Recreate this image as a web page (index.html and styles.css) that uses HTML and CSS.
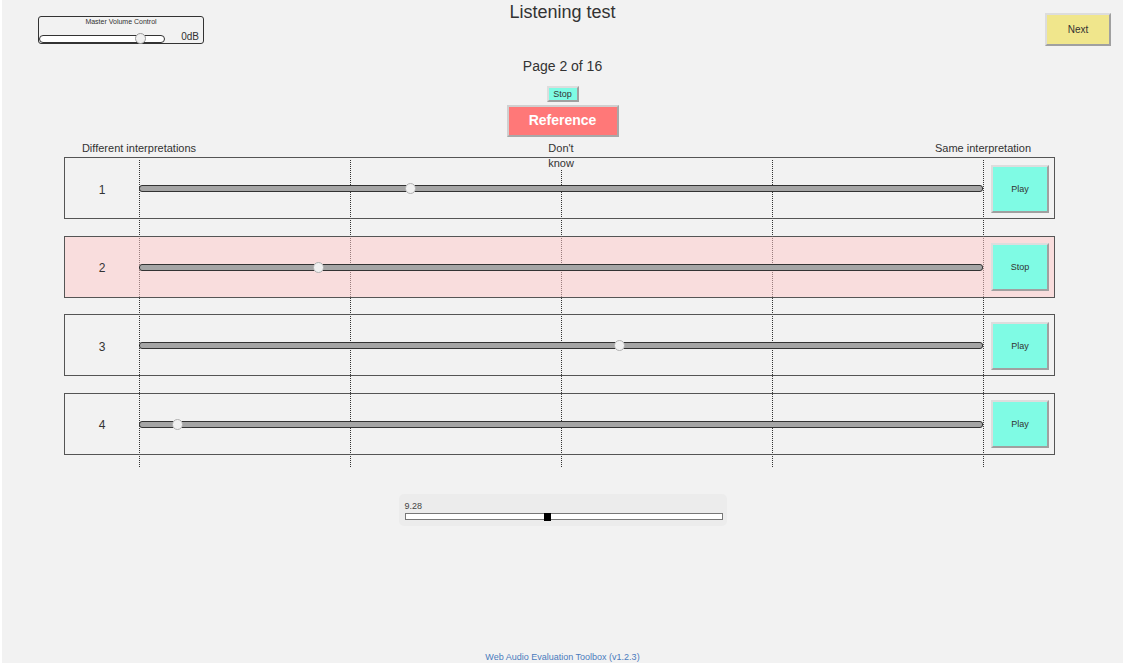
FILE: index.html
```html
<!DOCTYPE html>
<html>
<head>
<meta charset="utf-8">
<title>Listening test</title>
<link rel="stylesheet" href="styles.css">
</head>
<body>
<div class="page">
  <header class="top">
    <div class="master">
      <div class="master-label">Master Volume Control</div>
      <div class="master-row">
        <div class="master-slider">
          <div class="master-track"></div>
          <div class="master-thumb" style="left: 80.5%"></div>
        </div>
        <span class="master-value">0dB</span>
      </div>
    </div>
    <h1 class="title">Listening test</h1>
    <button class="btn btn-next">Next</button>
  </header>

  <div class="page-count">Page 2 of 16</div>
  <button class="btn btn-aqua btn-stop-small">Stop</button>
  <button class="btn btn-reference">Reference</button>

  <section class="test-area">
    <div class="scale">
      <span class="scale-label" style="left: 0%">Different interpretations</span>
      <span class="scale-label scale-label-mid" style="left: 50%">Don't know</span>
      <span class="scale-label" style="left: 100%">Same interpretation</span>
      <span class="tick" style="left: 0%"></span>
      <span class="tick" style="left: 25%"></span>
      <span class="tick tick-mid" style="left: 50%"></span>
      <span class="tick" style="left: 75%"></span>
      <span class="tick" style="left: 100%"></span>
    </div>
    <div class="rows">
      <div class="row">
        <div class="num">1</div>
        <div class="slider"><div class="track"></div><div class="thumb" style="left: 32.2%"></div></div>
        <button class="btn btn-aqua btn-play">Play</button>
      </div>
      <div class="row row-active">
        <div class="num">2</div>
        <div class="slider"><div class="track"></div><div class="thumb" style="left: 21.3%"></div></div>
        <button class="btn btn-aqua btn-play">Stop</button>
      </div>
      <div class="row">
        <div class="num">3</div>
        <div class="slider"><div class="track"></div><div class="thumb" style="left: 56.9%"></div></div>
        <button class="btn btn-aqua btn-play">Play</button>
      </div>
      <div class="row">
        <div class="num">4</div>
        <div class="slider"><div class="track"></div><div class="thumb" style="left: 4.6%"></div></div>
        <button class="btn btn-aqua btn-play">Play</button>
      </div>
    </div>
  </section>

  <div class="value-box">
    <div class="value-label">9.28</div>
    <div class="value-slider">
      <div class="value-thumb" style="left: 45%"></div>
    </div>
  </div>

  <footer class="footer">Web Audio Evaluation Toolbox (v1.2.3)</footer>
</div>
</body>
</html>
```

FILE: styles.css
```css
* { box-sizing: border-box; }

html, body {
  margin: 0;
  padding: 0;
  background: #ffffff;
}

body {
  font-family: "Liberation Sans", Arial, sans-serif;
  color: #333333;
}

.page {
  margin-left: 2px;
  width: 1121px;
  height: 663px;
  background: #f2f2f2;
  display: flex;
  flex-direction: column;
  align-items: center;
}

.top {
  width: 100%;
  height: 50px;
  display: grid;
  grid-template-columns: 1fr auto 1fr;
  align-items: start;
  padding: 0 12px;
}

.title {
  margin: 1px 0 0;
  font-size: 18px;
  line-height: 22px;
  font-weight: normal;
  color: #333333;
  text-align: center;
}

.master {
  margin-top: 16px;
  margin-left: 24px;
  width: 166px;
  height: 28px;
  border: 1px solid #333333;
  border-radius: 3px;
  padding-top: 1px;
}

.master-label {
  font-size: 7px;
  line-height: 8px;
  text-align: center;
  color: #333333;
}

.master-row {
  display: flex;
  align-items: center;
  margin-top: 5px;
  padding-right: 4px;
}

.master-slider {
  position: relative;
  width: 126px;
  height: 11px;
  display: flex;
  align-items: center;
}

.master-track {
  width: 100%;
  height: 8px;
  background: #ffffff;
  border: 1px solid #333333;
  border-radius: 4px;
}

.master-thumb {
  position: absolute;
  top: 0;
  width: 11px;
  height: 11px;
  margin-left: -5.5px;
  border-radius: 50%;
  background: #f0f0f0;
  border: 1px solid #9a9a9a;
}

.master-value {
  margin-left: auto;
  font-size: 10px;
  line-height: 11px;
  margin-bottom: 4px;
}

.btn {
  font-family: "Liberation Sans", Arial, sans-serif;
  color: #333333;
  padding: 0;
  border: 2px solid;
  border-color: #dddddd #a0a0a0 #a0a0a0 #dddddd;
  cursor: pointer;
}

.btn-next {
  justify-self: end;
  margin-top: 13px;
  width: 66px;
  height: 33px;
  background: #f0e68c;
  font-size: 10px;
}

.btn-aqua {
  background: #7ffbe4;
}

.page-count {
  margin-top: 8px;
  font-size: 14px;
  line-height: 16px;
}

.btn-stop-small {
  margin-top: 12px;
  width: 32px;
  height: 16px;
  font-size: 9px;
  line-height: 10px;
}

.btn-reference {
  margin-top: 3px;
  width: 112px;
  height: 32px;
  background: #ff7878;
  color: #ffffff;
  font-size: 14px;
  font-weight: bold;
  line-height: 14px;
  padding-bottom: 2px;
  border-color: #d0d0d0 #a8a8a8 #a8a8a8 #d0d0d0;
}

.test-area {
  position: relative;
  align-self: flex-start;
  margin-left: 62px;
  width: 991px;
  padding-top: 20px;
}

.scale {
  position: absolute;
  left: 75px;
  top: 0;
  width: 844px;
  height: 330px;
  z-index: 0;
}

.scale-label {
  position: absolute;
  top: 4px;
  transform: translateX(-50%);
  font-size: 11px;
  line-height: 15px;
  white-space: nowrap;
}

.scale-label-mid {
  width: 40px;
  white-space: normal;
  text-align: center;
}

.tick {
  position: absolute;
  top: 23px;
  bottom: 0;
  width: 0;
  border-left: 1px dotted #333333;
}

.tick-mid {
  top: 33px;
}

.rows {
  position: relative;
  z-index: 1;
  display: flex;
  flex-direction: column;
  gap: 16.67px;
}

.row {
  height: 62px;
  border: 1px solid #555555;
  display: flex;
  align-items: center;
  padding-right: 5px;
  padding-top: 1px;
}

.row-active {
  background: rgba(255, 200, 200, 0.5);
}

.num {
  width: 74px;
  text-align: center;
  font-size: 12px;
  padding-top: 2px;
}

.slider {
  position: relative;
  width: 844px;
  height: 11px;
  display: flex;
  align-items: center;
}

.track {
  width: 100%;
  height: 7px;
  background: #a5a5a5;
  border: 1px solid #333333;
  border-radius: 3px;
}

.thumb {
  position: absolute;
  top: 0;
  width: 11px;
  height: 11px;
  margin-left: -5.5px;
  border-radius: 50%;
  background: #f0f0f0;
  border: 1px solid #b0b0b0;
}

.btn-play {
  margin-left: 8px;
  width: 58px;
  height: 48px;
  font-size: 9px;
}

.value-box {
  margin-top: 39px;
  width: 328px;
  height: 32px;
  background: #ececec;
  border-radius: 5px;
  padding: 7px 5px 0 6px;
}

.value-label {
  font-size: 9px;
  line-height: 10px;
  color: #444444;
}

.value-slider {
  position: relative;
  margin-top: 2px;
  width: 318px;
  height: 7px;
  background: #ffffff;
  border: 1px solid #777777;
}

.value-thumb {
  position: absolute;
  top: -1px;
  width: 7px;
  height: 8px;
  margin-left: -3.5px;
  background: #000000;
}

.footer {
  margin-top: auto;
  font-size: 9px;
  line-height: 12px;
  color: #4b7bbd;
}
```
